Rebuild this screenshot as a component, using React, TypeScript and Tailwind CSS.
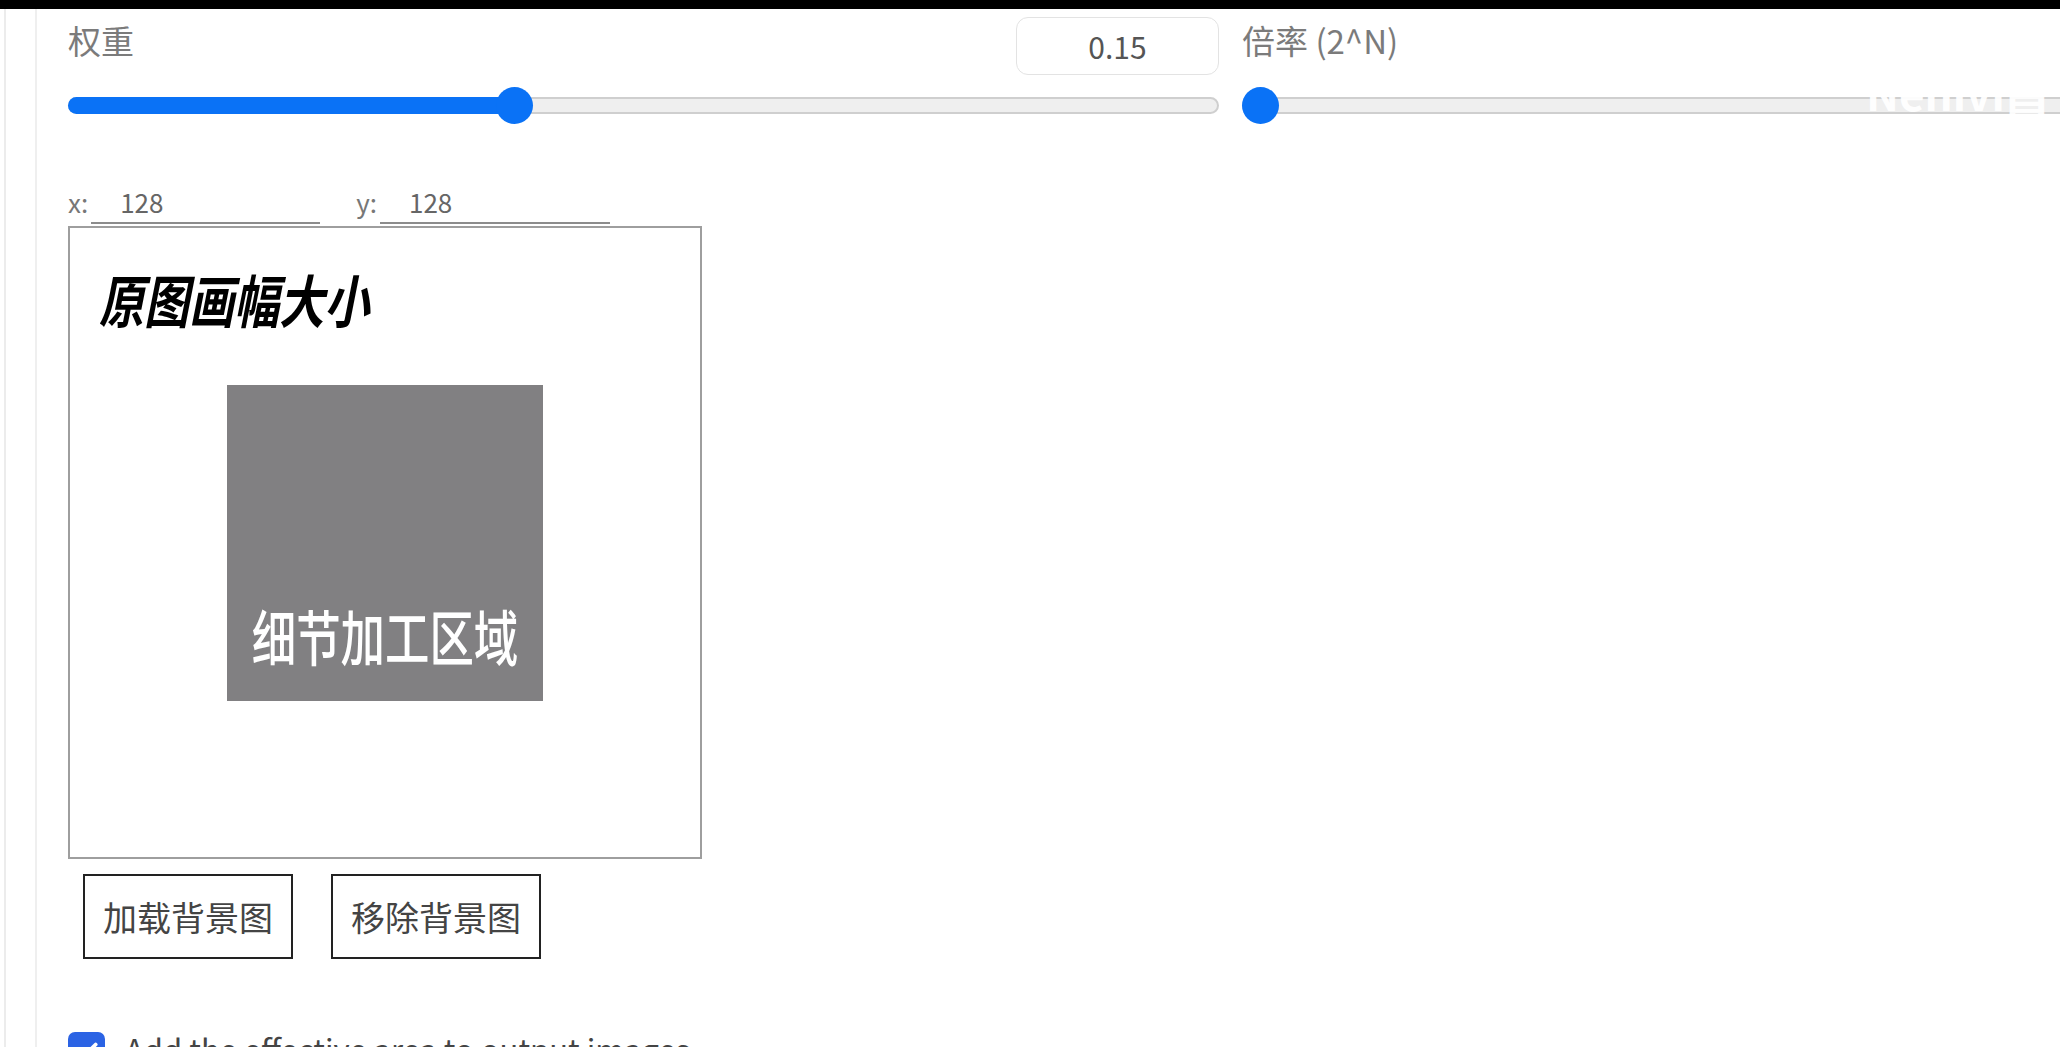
import { Check } from "lucide-react";

function Label({ children }: { children: React.ReactNode }) {
  return <div className="text-[33px] leading-[46px] text-[#7b7b7b]">{children}</div>;
}

export default function App() {
  return (
    <div className="relative h-[1047px] w-full overflow-hidden bg-white font-['Noto_Sans_CJK_SC',sans-serif]">
      <div className="h-[9px] bg-black" />
      <div className="flex h-[1038px]">
        <div className="w-[4px] shrink-0" />
        <div className="w-[2px] shrink-0 bg-[#ececec]" />
        <div className="w-[29px] shrink-0" />
        <div className="w-[2px] shrink-0 bg-[#efefef]" />
        <div className="min-w-0 flex-1 pl-[31px]">
          {/* sliders row */}
          <div className="flex gap-[23px]">
            <div className="w-[1151px] shrink-0">
              <div className="flex h-[66px] items-start justify-between pt-[8px]">
                <Label>权重</Label>
                <div className="flex h-[58px] w-[203px] items-center justify-center rounded-[12px] border border-[#e3e3e3] text-[30px] text-[#555]">
                  0.15
                </div>
              </div>
              <div className="relative mt-[12px] flex h-[37px] items-center">
                <div className="relative h-[17px] w-full rounded-full border-2 border-[#cfcfcf] bg-[#efefef]">
                  <div className="absolute left-[-2px] top-[-2px] h-[17px] w-[449px] rounded-full bg-[#0a72f6]" />
                </div>
                <div className="absolute left-[428px] top-0 h-[37px] w-[37px] rounded-full bg-[#0a72f6]" />
              </div>
            </div>
            <div className="w-[900px] shrink-0">
              <div className="flex h-[66px] items-start pt-[8px]">
                <Label>倍率 (2^N)</Label>
              </div>
              <div className="relative mt-[12px] flex h-[37px] items-center">
                <div className="h-[17px] w-full rounded-full border-2 border-[#cfcfcf] bg-[#efefef]" />
                <div className="absolute left-0 top-0 h-[37px] w-[37px] rounded-full bg-[#0a72f6]" />
              </div>
            </div>
          </div>

          {/* x / y inputs */}
          <div className="mt-[62px] flex items-end text-[26px] leading-[32px]">
            <div className="pb-[6px] text-[#777]">x:</div>
            <div className="ml-[3px] w-[229px] border-b-2 border-[#8c8c8c] pb-[4px] pl-[29px] text-[#666]">128</div>
            <div className="ml-[36px] pb-[6px] text-[#777]">y:</div>
            <div className="ml-[3px] w-[230px] border-b-2 border-[#8c8c8c] pb-[4px] pl-[29px] text-[#666]">128</div>
          </div>

          {/* canvas */}
          <div className="relative mt-[2px] flex h-[633px] w-[634px] items-center justify-center border-2 border-[#9e9e9e]">
            <div className="absolute left-[29px] top-[42px] origin-left scale-x-[0.79] whitespace-nowrap text-[57px] font-bold italic leading-[57px] text-black">
              原图画幅大小
            </div>
            <div className="flex h-[316px] w-[316px] items-end justify-center bg-[#818082] pb-[36px]">
              <div className="shrink-0 scale-x-[0.74] whitespace-nowrap text-[60px] font-medium leading-[60px] text-white">
                细节加工区域
              </div>
            </div>
          </div>

          {/* buttons */}
          <div className="ml-[15px] mt-[15px] flex gap-[38px]">
            <div className="flex h-[85px] w-[210px] items-center justify-center border-2 border-[#222] text-[34px] text-[#444]">
              加载背景图
            </div>
            <div className="flex h-[85px] w-[210px] items-center justify-center border-2 border-[#222] text-[34px] text-[#444]">
              移除背景图
            </div>
          </div>

          {/* checkbox */}
          <div className="mt-[73px] flex items-start gap-[20px]">
            <div className="flex h-[37px] w-[37px] shrink-0 items-center justify-center rounded-[7px] bg-[#2b63e4]">
              <Check className="h-[26px] w-[26px] text-white" strokeWidth={3.5} />
            </div>
            <div className="mt-[-2px] whitespace-nowrap text-[31px] leading-[37px] text-[#444]">Add the effective area to output images</div>
          </div>
        </div>
      </div>

      {/* watermark */}
      <div className="absolute left-[1866px] top-[68px] whitespace-nowrap text-[44px] font-bold leading-[48px] text-white opacity-95">
        Nenivi昌
      </div>
    </div>
  );
}
